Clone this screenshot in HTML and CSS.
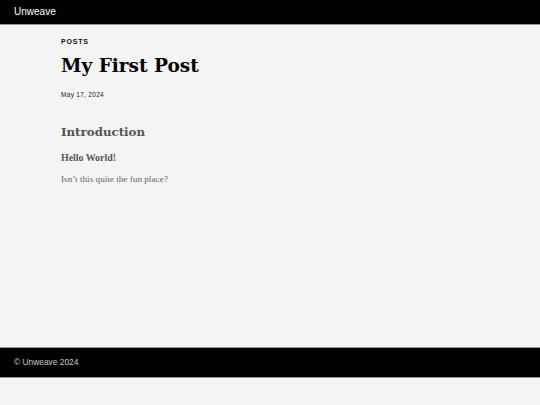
FILE: index.html
```html
<!DOCTYPE html>
<html>
<head>
<meta charset="utf-8">
<link rel="stylesheet" href="styles.css">
</head>
<body>
<div class="page">
  <header class="site-header">Unweave</header>
  <main class="content">
    <div class="kicker">POSTS</div>
    <h1 class="title">My First Post</h1>
    <div class="date">May 17, 2024</div>
    <h2 class="section">Introduction</h2>
    <h3 class="sub">Hello World!</h3>
    <p class="text">Isn’t this quite the fun place?</p>
  </main>
  <footer class="site-footer">© Unweave 2024</footer>
</div>
</body>
</html>
```
FILE: styles.css
```css
html, body {
  margin: 0;
  padding: 0;
  background: #f4f4f4;
}
.page {
  display: flex;
  flex-direction: column;
  height: 378px;
}
.site-header {
  background: #000;
  color: #fff;
  font-family: "Liberation Sans", Arial, sans-serif;
  font-size: 10px;
  height: 24px;
  line-height: 24px;
  padding-left: 14px;
  border-bottom: 1px solid #999;
}
.content {
  flex: 1;
  padding: 12.5px 61px 0;
}
.kicker {
  font-family: "Liberation Sans", Arial, sans-serif;
  font-size: 7px;
  line-height: 8px;
  font-weight: bold;
  letter-spacing: 0.8px;
  color: #111;
}
.title {
  font-family: "DejaVu Serif", Georgia, serif;
  font-size: 18.5px;
  line-height: 22px;
  font-weight: bold;
  margin: 9.5px 0 0;
  color: #000;
}
.date {
  font-family: "Liberation Sans", Arial, sans-serif;
  font-size: 6.5px;
  line-height: 8px;
  letter-spacing: 0.3px;
  color: #222;
  margin-top: 13.7px;
}
.section {
  font-family: "DejaVu Serif", Georgia, serif;
  font-size: 11.8px;
  line-height: 14px;
  font-weight: bold;
  color: #555;
  margin: 26px 0 0;
}
.sub {
  font-family: "Liberation Serif", "Times New Roman", serif;
  font-size: 9.9px;
  line-height: 11px;
  font-weight: bold;
  color: #555;
  margin: 13px 0 0;
}
.text {
  font-family: "Liberation Serif", "Times New Roman", serif;
  font-size: 9.2px;
  line-height: 11px;
  color: #666;
  margin: 11.8px 0 0;
}
.site-footer {
  background: #000;
  color: #ccc;
  font-family: "Liberation Sans", Arial, sans-serif;
  font-size: 8.4px;
  height: 29px;
  line-height: 29px;
  padding-left: 14px;
  border-top: 1px solid #999;
  border-bottom: 1px solid #999;
}
```
